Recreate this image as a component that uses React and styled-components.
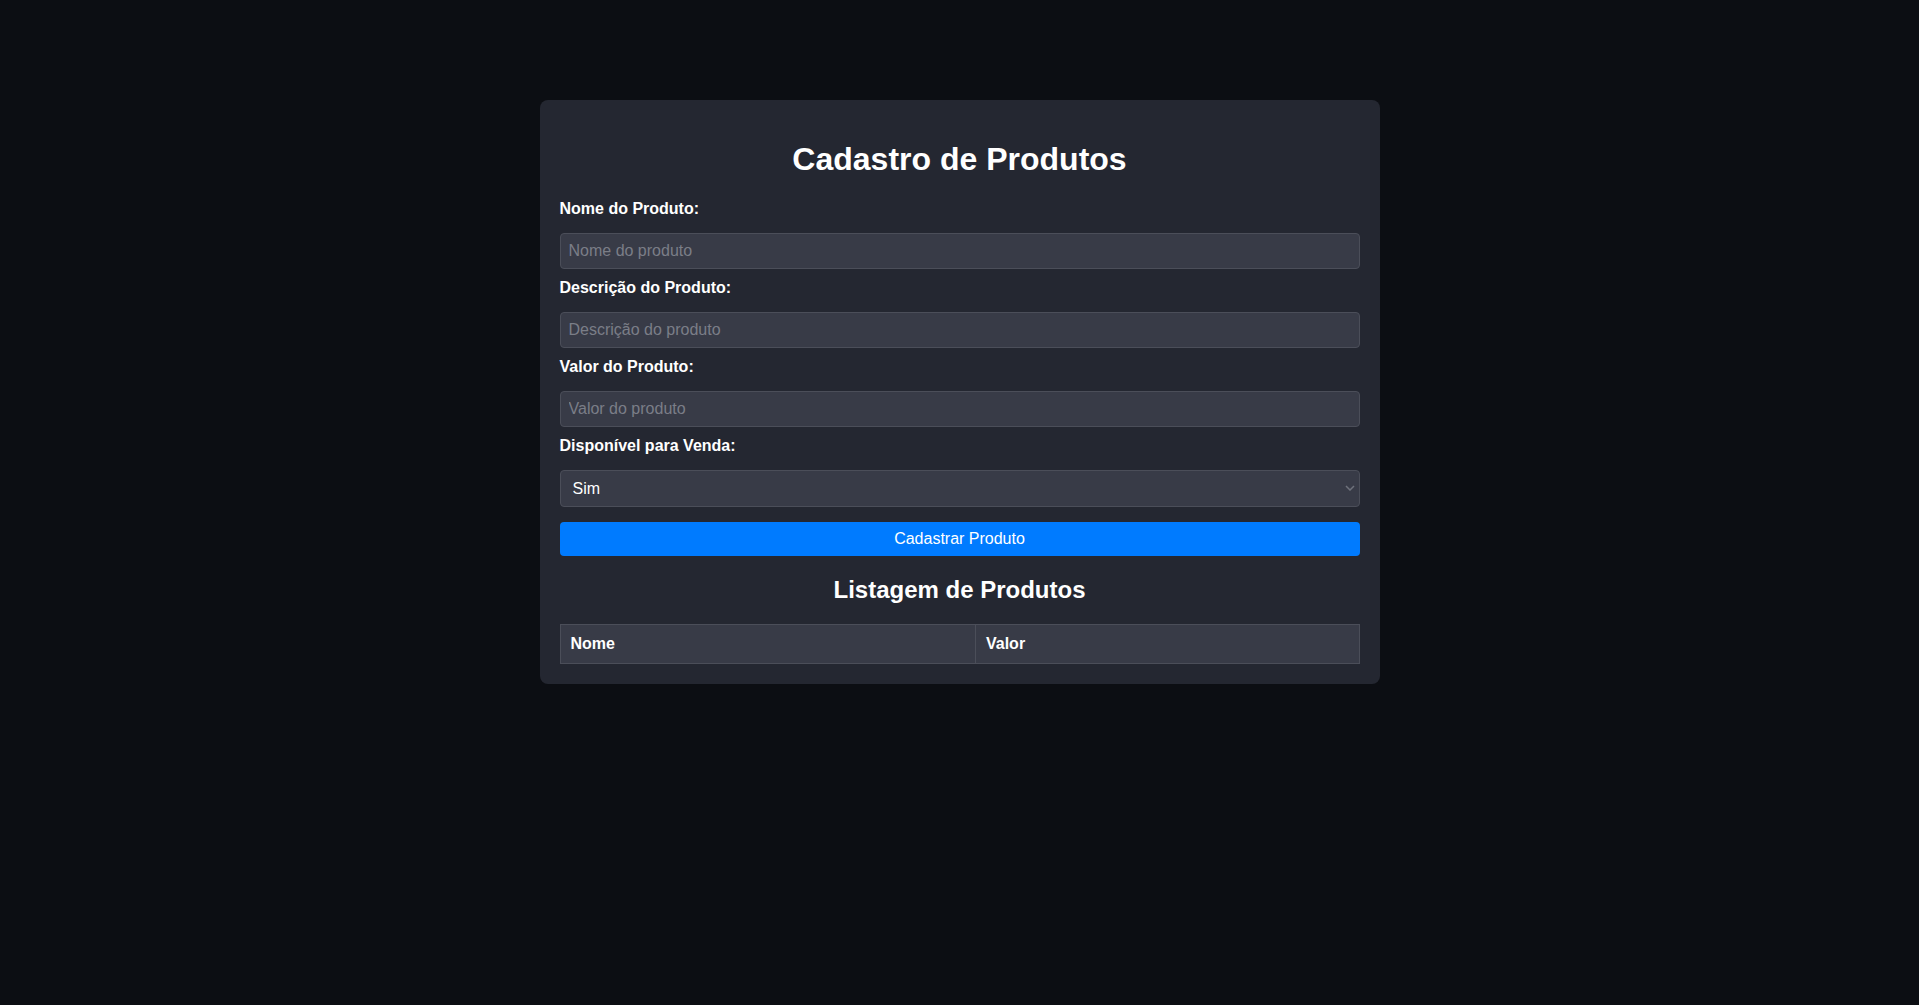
import React, { useState } from 'react'
import styled, { createGlobalStyle } from 'styled-components'

const GlobalStyle = createGlobalStyle`
	body {
		margin: 0;
		background: #0c0e13;
		font-family: 'Liberation Sans', Arial, sans-serif;
		color: #ffffff;
	}
`

const Page = styled.main`
	min-height: 100vh;
	display: flex;
	justify-content: center;
	align-items: flex-start;
	padding-top: 100px;
	box-sizing: border-box;
`

const Card = styled.section`
	width: 840px;
	box-sizing: border-box;
	padding: 20px;
	background: #242731;
	border-radius: 8px;
`

const Title = styled.h1`
	font-size: 32px;
	font-weight: 700;
	text-align: center;
	margin: 0.67em 0;
	line-height: normal;
`

const SubTitle = styled.h2`
	font-size: 24px;
	font-weight: 700;
	text-align: center;
	margin: 0.83em 0;
	line-height: normal;
`

const Form = styled.form`
	display: flex;
	flex-direction: column;
`

const Label = styled.label`
	display: block;
	font-size: 16px;
	font-weight: 700;
	line-height: normal;
	margin-bottom: 15px;
`

const Input = styled.input`
	display: block;
	width: 100%;
	height: 36px;
	box-sizing: border-box;
	margin: 0 0 10.2px;
	padding: 8px;
	font-family: inherit;
	font-size: 16px;
	color: #ffffff;
	background: #383b47;
	border: 1px solid #4b4e59;
	border-radius: 4px;
	outline: none;

	&::placeholder {
		color: #7b7e87;
	}
`

const SelectWrap = styled.div`
	position: relative;
	margin-bottom: 15px;
`

const Select = styled.select`
	display: block;
	width: 100%;
	height: 36.7px;
	box-sizing: border-box;
	padding: 0 30px 0 12px;
	font-family: inherit;
	font-size: 16px;
	color: #ffffff;
	background: #383b47;
	border: 1px solid #4b4e59;
	border-radius: 4px;
	appearance: none;
	outline: none;
`

const Chevron = styled.svg`
	position: absolute;
	right: 5px;
	top: 15px;
	pointer-events: none;
`

const Button = styled.button`
	height: 33.7px;
	width: 100%;
	border: none;
	border-radius: 4px;
	background: #007bff;
	color: #ffffff;
	font-family: inherit;
	font-size: 16px;
	cursor: pointer;
`

const Table = styled.table`
	width: 100%;
	border-collapse: collapse;
`

const Th = styled.th`
	width: ${(p) => p.w || 'auto'};
	text-align: left;
	padding: 10px;
	font-size: 16px;
	font-weight: 700;
	line-height: normal;
	background: #383b47;
	border: 1px solid #4b4e59;
`

const App = () => {
	const [disponivel, setDisponivel] = useState('sim')

	return (
		<>
			<GlobalStyle />
			<Page>
				<Card>
					<Title>Cadastro de Produtos</Title>
					<Form onSubmit={(e) => e.preventDefault()}>
						<Label htmlFor="nome">Nome do Produto:</Label>
						<Input id="nome" placeholder="Nome do produto" />

						<Label htmlFor="descricao">Descrição do Produto:</Label>
						<Input id="descricao" placeholder="Descrição do produto" />

						<Label htmlFor="valor">Valor do Produto:</Label>
						<Input id="valor" placeholder="Valor do produto" />

						<Label htmlFor="disponivel">Disponível para Venda:</Label>
						<SelectWrap>
							<Select
								id="disponivel"
								value={disponivel}
								onChange={(e) => setDisponivel(e.target.value)}
							>
								<option value="sim">Sim</option>
								<option value="nao">Não</option>
							</Select>
							<Chevron width="10" height="6" viewBox="0 0 10 6">
								<path
									d="M1 1l4 4 4-4"
									fill="none"
									stroke="#6f727c"
									strokeWidth="1.5"
								/>
							</Chevron>
						</SelectWrap>

						<Button type="submit">Cadastrar Produto</Button>
					</Form>

					<SubTitle>Listagem de Produtos</SubTitle>
					<Table>
						<thead>
							<tr>
								<Th w="52%">Nome</Th>
								<Th>Valor</Th>
							</tr>
						</thead>
						<tbody></tbody>
					</Table>
				</Card>
			</Page>
		</>
	)
}

export default App
